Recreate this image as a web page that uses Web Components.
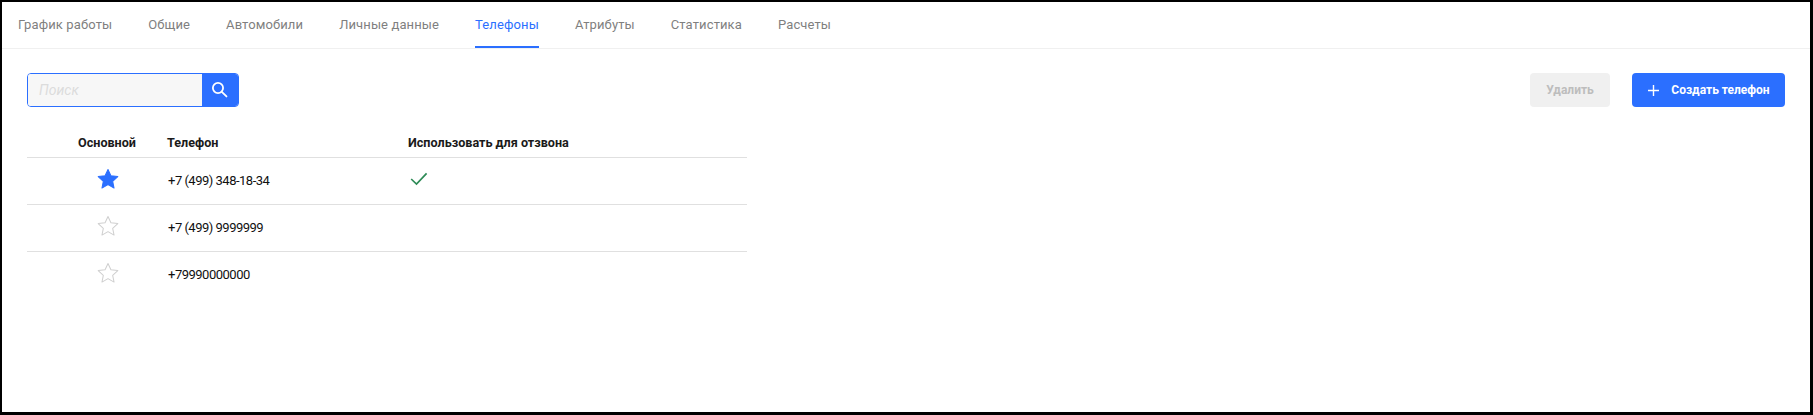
<!DOCTYPE html>
<html lang="ru">
<head>
<meta charset="utf-8">
<title>Телефоны</title>
<style>
  html, body { margin: 0; height: 100%; background: #fff; }
  body { font-family: Roboto, "Liberation Sans", sans-serif; overflow: hidden; }
</style>
</head>
<body>
<phones-page></phones-page>

<script>
const STAR = 'M12 1.6l3.2 6.9 7.5.9-5.6 5.1 1.5 7.4L12 18.2l-6.6 3.7 1.5-7.4-5.6-5.1 7.5-.9z';

// Вкладки сверху
class TabBar extends HTMLElement {
  constructor() {
    super();
    this.attachShadow({ mode: 'open' });
  }
  connectedCallback() {
    const active = this.getAttribute('active');
    const tabs = this.getAttribute('tabs').split('|');
    this.shadowRoot.innerHTML = `
      <style>
        :host { display: flex; gap: 36px; height: 46px; padding-left: 16px; border-bottom: 1px solid #f0f0f0; }
        a { display: block; height: 44px; line-height: 46px; font-size: 13px; color: #7f7f7f; letter-spacing: .12px; white-space: nowrap; }
        a.on { color: #2b6fff; border-bottom: 2px solid #2b6fff; }
      </style>
      ${tabs.map(t => `<a class="${t === active ? 'on' : ''}">${t}</a>`).join('')}
    `;
  }
}
customElements.define('tab-bar', TabBar);

// Поле поиска с кнопкой
class SearchBox extends HTMLElement {
  constructor() {
    super();
    this.attachShadow({ mode: 'open' });
    this.shadowRoot.innerHTML = `
      <style>
        :host { display: flex; width: 212px; height: 34px; box-sizing: border-box; border: 1px solid #2b6fff; border-radius: 4px; overflow: hidden; }
        .field { flex: 1; background: #f7f7f7; padding-left: 11px; line-height: 32px; font-size: 14px; font-style: italic; color: #dcdcdc; }
        .btn { width: 36px; background: #2b6fff; display: flex; align-items: center; justify-content: center; padding: 0 2px 1px 0; box-sizing: border-box; }
        svg { display: block; }
      </style>
      <div class="field">Поиск</div>
      <div class="btn">
        <svg width="17" height="17" viewBox="0 0 18 18" fill="none" stroke="#fff" stroke-width="1.9" stroke-linecap="round">
          <circle cx="7.4" cy="7.4" r="5.4"/><path d="M11.4 11.4l5 5"/>
        </svg>
      </div>
    `;
  }
}
customElements.define('search-box', SearchBox);

// Кнопка, вид задаётся атрибутом kind
class UiButton extends HTMLElement {
  constructor() {
    super();
    this.attachShadow({ mode: 'open' });
    this.shadowRoot.innerHTML = `
      <style>
        :host { display: flex; align-items: center; justify-content: center; height: 34px; border-radius: 4px; font-size: 12px; font-weight: 700; white-space: nowrap; box-sizing: border-box; }
        :host([kind="disabled"]) { width: 80px; background: #f0f0f0; color: #bdbdbd; }
        :host([kind="primary"]) { width: 153px; background: #2b6fff; color: #fff; gap: 11px; }
      </style>
      <slot name="icon"></slot><slot></slot>
    `;
  }
}
customElements.define('ui-button', UiButton);

// Строка таблицы
class PhoneRow extends HTMLElement {
  constructor() {
    super();
    this.attachShadow({ mode: 'open' });
  }
  connectedCallback() {
    const main = this.hasAttribute('main');
    const callback = this.hasAttribute('callback');
    this.shadowRoot.innerHTML = `
      <style>
        :host { display: grid; grid-template-columns: 140px 241px 1fr; align-items: center; height: 46px; border-bottom: 1px solid #e0e0e0; font-size: 13px; letter-spacing: -.5px; color: #111; }
        :host([last]) { border-bottom: 0; }
        .star { display: flex; justify-content: center; padding-left: 21px; margin-top: -4px; }
        .phone { margin-top: -1px; padding-left: 1px; }
        .check { display: flex; padding-left: 2px; margin-top: -5px; }
        svg { display: block; }
      </style>
      <div class="star">
        <svg width="22" height="22" viewBox="0 0 24 24">
          <path d="${STAR}" fill="${main ? '#2b6fff' : 'none'}" stroke="${main ? '#2b6fff' : '#cfcfcf'}" stroke-width="1.1" stroke-linejoin="round"/>
        </svg>
      </div>
      <div class="phone"><slot></slot></div>
      <div class="check">${callback ? `
        <svg width="18" height="14" viewBox="0 0 18 14" fill="none" stroke="#2e8b57" stroke-width="1.7">
          <path d="M1.2 7l5.3 5L16.6 1.4"/>
        </svg>` : ''}</div>
    `;
  }
}
customElements.define('phone-row', PhoneRow);

// Таблица телефонов
class PhoneTable extends HTMLElement {
  constructor() {
    super();
    this.attachShadow({ mode: 'open' });
    this.shadowRoot.innerHTML = `
      <style>
        :host { display: block; width: 720px; }
        .head { display: grid; grid-template-columns: 140px 241px 1fr; height: 30px; align-items: center; border-bottom: 1px solid #e0e0e0; font-size: 12.6px; font-weight: 700; color: #1a1a1a; }
        .head div { margin-top: 1px; }
        .head div:first-child { text-align: center; padding-left: 20px; }
      </style>
      <div class="head">
        <div>Основной</div><div>Телефон</div><div>Использовать для отзвона</div>
      </div>
      <slot></slot>
    `;
  }
}
customElements.define('phone-table', PhoneTable);

// Страница целиком
class PhonesPage extends HTMLElement {
  constructor() {
    super();
    this.attachShadow({ mode: 'open' });
    this.shadowRoot.innerHTML = `
      <style>
        :host { display: block; height: 415px; box-sizing: border-box; border: solid #000; border-width: 2px 3px 3px 2px; background: #fff; font-family: Roboto, "Liberation Sans", sans-serif; }
        .content { padding: 24px 25px 0 25px; }
        .toolbar { display: flex; align-items: center; }
        .spacer { flex: 1; }
        ui-button + ui-button { margin-left: 22px; }
        phone-table { margin-top: 20px; }
      </style>
      <tab-bar active="Телефоны" tabs="График работы|Общие|Автомобили|Личные данные|Телефоны|Атрибуты|Статистика|Расчеты"></tab-bar>
      <div class="content">
        <div class="toolbar">
          <search-box></search-box>
          <div class="spacer"></div>
          <ui-button kind="disabled">Удалить</ui-button>
          <ui-button kind="primary">
            <svg slot="icon" width="13" height="13" viewBox="0 0 13 13" stroke="#fff" stroke-width="1.4"><path d="M6.5 1v11M1 6.5h11"/></svg>
            Создать телефон
          </ui-button>
        </div>
        <phone-table>
          <phone-row main callback>+7 (499) 348-18-34</phone-row>
          <phone-row>+7 (499) 9999999</phone-row>
          <phone-row last>+79990000000</phone-row>
        </phone-table>
      </div>
    `;
  }
}
customElements.define('phones-page', PhonesPage);
</script>
</body>
</html>
